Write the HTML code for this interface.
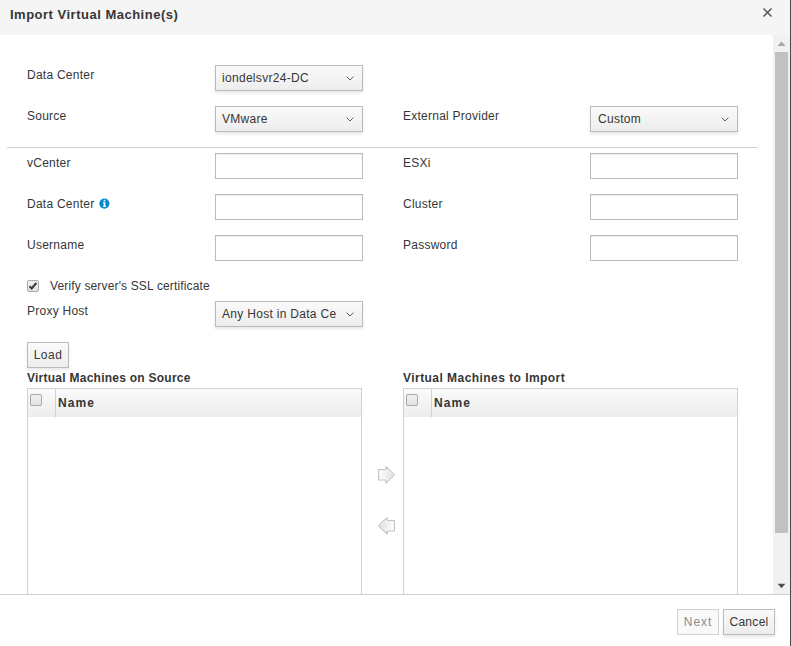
<!DOCTYPE html>
<html><head><meta charset="utf-8">
<style>
*{box-sizing:border-box;margin:0;padding:0}
html,body{width:791px;height:646px;overflow:hidden;background:#fff}
body{position:relative;font-family:"Liberation Sans",sans-serif;font-size:12px;color:#363636}
.a{position:absolute}
.t{position:absolute;white-space:nowrap;line-height:14px;font-size:12px;letter-spacing:0.25px}
.hdr{left:0;top:0;width:790px;height:35px;background:#f5f5f5}
.title{left:10px;top:7px;font-weight:bold;font-size:13px;letter-spacing:0.5px;line-height:16px;color:#363636}
.close{left:763px;top:8px;width:9px;height:9px}
.rline{left:790px;top:0;width:1px;height:646px;background:#484848}
.sel{position:absolute;width:148px;height:26px;border:1px solid #bbb;background:linear-gradient(#fafafa,#ededed);box-shadow:0 2px 3px rgba(3,3,3,.1);overflow:hidden}
.sel span{position:absolute;left:6px;top:5px;line-height:14px;white-space:nowrap;letter-spacing:0.3px}
.sel svg{position:absolute;left:130px;top:10px}
.inp{position:absolute;width:148px;height:26px;border:1px solid #bbb;background:#fff;box-shadow:inset 0 1px 1px rgba(3,3,3,.075)}
.sep{left:7px;top:147px;width:751px;height:1px;background:#d1d1d1}
.btn{position:absolute;height:26px;border:1px solid #bbb;background:linear-gradient(#fafafa,#ededed);box-shadow:0 2px 3px rgba(3,3,3,.1);text-align:center;line-height:23px;padding-top:1px;color:#363636}
.tbl{position:absolute;width:335px;height:220px;border:1px solid #d1d1d1;border-bottom:none;background:#fff}
.th{position:absolute;left:0;top:0;width:333px;height:28px;background:linear-gradient(#fafafa,#ededed)}
.thsep{position:absolute;left:27px;top:0;width:1px;height:28px;background:#d1d1d1}
.cb{position:absolute;width:12px;height:12px;border:1px solid #a9a9a9;border-radius:2px;background:linear-gradient(#f0f0f0,#e2e2e2)}
.scroll{left:773px;top:35px;width:17px;height:559px;background:#f1f1f1}
.thumb{left:775px;top:52px;width:13px;height:481px;background:#c1c1c1}
.ftline{left:0;top:594px;width:790px;height:1px;background:#d1d1d1}
</style></head><body>
<div class="a hdr"></div>
<div class="t title">Import Virtual Machine(s)</div>
<svg class="a close" viewBox="0 0 9 9"><path d="M0.5 0.5L8.5 8.5M8.5 0.5L0.5 8.5" stroke="#4d4d4d" stroke-width="1.35"/></svg>

<!-- row 1 -->
<div class="t" style="left:27px;top:68px">Data Center</div>
<div class="sel" style="left:215px;top:65px"><span>iondelsvr24-DC</span><svg width="8" height="5" viewBox="0 0 8 5"><path d="M0.6 0.6L4 4L7.4 0.6" fill="none" stroke="#4d5258" stroke-width="0.9"/></svg></div>

<div class="t" style="left:27px;top:109px">Source</div>
<div class="sel" style="left:215px;top:106px"><span>VMware</span><svg width="8" height="5" viewBox="0 0 8 5"><path d="M0.6 0.6L4 4L7.4 0.6" fill="none" stroke="#4d5258" stroke-width="0.9"/></svg></div>
<div class="t" style="left:403px;top:109px">External Provider</div>
<div class="sel" style="left:590px;top:106px"><span style="left:7px">Custom</span><svg width="8" height="5" viewBox="0 0 8 5"><path d="M0.6 0.6L4 4L7.4 0.6" fill="none" stroke="#4d5258" stroke-width="0.9"/></svg></div>

<div class="a sep"></div>

<div class="t" style="left:27px;top:156px">vCenter</div>
<div class="inp" style="left:215px;top:153px"></div>
<div class="t" style="left:403px;top:156px">ESXi</div>
<div class="inp" style="left:590px;top:153px"></div>

<div class="t" style="left:27px;top:197px">Data Center</div>
<svg class="a" style="left:99px;top:198px" width="11" height="11" viewBox="0 0 11 11"><circle cx="5.4" cy="5.6" r="5.1" fill="#0088ce"/><rect x="4.6" y="1.8" width="1.8" height="1.6" fill="#fff"/><path d="M3.9 4.2H6.4V8H7.1V9H3.9V8H4.6V5.2H3.9Z" fill="#fff"/></svg>
<div class="inp" style="left:215px;top:194px"></div>
<div class="t" style="left:403px;top:197px">Cluster</div>
<div class="inp" style="left:590px;top:194px"></div>

<div class="t" style="left:27px;top:238px">Username</div>
<div class="inp" style="left:215px;top:235px"></div>
<div class="t" style="left:403px;top:238px">Password</div>
<div class="inp" style="left:590px;top:235px"></div>

<!-- checkbox -->
<div class="cb" style="left:27px;top:280px"></div>
<svg class="a" style="left:28px;top:281px" width="10" height="10" viewBox="0 0 10 10"><path d="M1.5 5.3L3.7 7.4L8.3 2" fill="none" stroke="#3a3a3a" stroke-width="2.1"/></svg>
<div class="t" style="left:50px;top:279px;letter-spacing:0.15px">Verify server's SSL certificate</div>

<div class="t" style="left:27px;top:304px">Proxy Host</div>
<div class="sel" style="left:215px;top:301px"><span>Any Host in Data Ce</span><svg width="8" height="5" viewBox="0 0 8 5"><path d="M0.6 0.6L4 4L7.4 0.6" fill="none" stroke="#4d5258" stroke-width="0.9"/></svg></div>

<div class="btn" style="left:27px;top:342px;width:42px;letter-spacing:0.5px">Load</div>

<div class="t" style="left:27px;top:371px;font-weight:bold">Virtual Machines on Source</div>
<div class="tbl" style="left:27px;top:388px"><div class="th"><div class="thsep"></div></div></div>
<div class="cb" style="left:30px;top:394px"></div>
<div class="t" style="left:58px;top:396px;font-weight:bold;letter-spacing:1.1px">Name</div>

<div class="t" style="left:403px;top:371px;font-weight:bold;letter-spacing:0.45px">Virtual Machines to Import</div>
<div class="tbl" style="left:403px;top:388px"><div class="th"><div class="thsep"></div></div></div>
<div class="cb" style="left:406px;top:394px"></div>
<div class="t" style="left:434px;top:396px;font-weight:bold;letter-spacing:1.1px">Name</div>

<!-- arrows -->
<svg class="a" style="left:376px;top:464px" width="22" height="22" viewBox="0 0 22 22">
<defs><linearGradient id="ga" x1="0" x2="1"><stop offset="0" stop-color="#fbfbfb"/><stop offset="0.3" stop-color="#f6f6f6"/><stop offset="1" stop-color="#dedede"/></linearGradient></defs>
<path d="M2.6 5.6H10V2.6L18.3 10.9L10 19.2V16H2.6Z" fill="#fff" stroke="#c4c4c4" stroke-width="1.2" stroke-linejoin="round"/>
<path d="M3.7 6.7H11.1V5.3L16.7 10.9L11.1 16.5V14.9H3.7Z" fill="url(#ga)"/></svg>
<svg class="a" style="left:376px;top:515px" width="22" height="22" viewBox="0 0 22 22">
<defs><linearGradient id="gb" x1="1" x2="0"><stop offset="0" stop-color="#fbfbfb"/><stop offset="0.3" stop-color="#f6f6f6"/><stop offset="1" stop-color="#dedede"/></linearGradient></defs>
<path d="M18.4 5.6H11.2V2.6L2.7 10.8L11.2 19V16H18.4Z" fill="#fff" stroke="#c4c4c4" stroke-width="1.2" stroke-linejoin="round"/>
<path d="M17.3 6.7H10.1V5.3L4.4 10.8L10.1 16.3V14.9H17.3Z" fill="url(#gb)"/></svg>
<!-- scrollbar -->
<div class="a scroll"></div>
<div class="a thumb"></div>
<svg class="a" style="left:777px;top:41px" width="9" height="6" viewBox="0 0 9 6"><path d="M0.6 5L4.5 0.6L8.4 5Z" fill="#a3a3a3"/></svg>
<svg class="a" style="left:777px;top:583px" width="9" height="6" viewBox="0 0 9 6"><path d="M0.6 0.8L4.5 5.2L8.4 0.8Z" fill="#505050"/></svg>

<!-- footer -->
<div class="a" style="left:0;top:595px;width:790px;height:51px;background:#fff"></div>
<div class="a ftline"></div>
<div class="btn" style="left:677px;top:609px;width:42px;background:#f9f9f9;border-color:#d1d1d1;box-shadow:none;color:#8b8d8f;letter-spacing:0.9px">Next</div>
<div class="btn" style="left:723px;top:609px;width:52px;letter-spacing:0.3px">Cancel</div>

<div class="a rline"></div>
</body></html>
